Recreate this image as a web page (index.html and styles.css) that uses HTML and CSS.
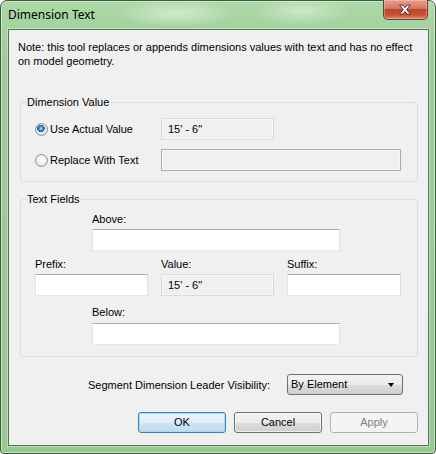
FILE: index.html
```html
<!DOCTYPE html>
<html>
<head>
<meta charset="utf-8">
<link rel="stylesheet" href="styles.css">
</head>
<body>
<div class="window">
  <div class="titlebar">
    <span class="title">Dimension Text</span>
    <div class="close">
      <svg width="45" height="20" viewBox="0 0 45 20">
        <path d="M17 5 L20.5 5 L22.5 7.6 L24.5 5 L28 5 L24.3 9.6 L28 14.2 L24.5 14.2 L22.5 11.6 L20.5 14.2 L17 14.2 L20.7 9.6 Z" fill="#ffffff" stroke="#5a2a22" stroke-width="1" stroke-linejoin="round"/>
      </svg>
    </div>
  </div>
  <div class="client">
    <p class="note">Note: this tool replaces or appends dimensions values with text and has no effect<br>on model geometry.</p>

    <fieldset class="group g1">
      <legend>Dimension Value</legend>
      <div class="radio-row">
        <div class="radio-opt"><span class="radio checked"></span><span>Use Actual Value</span></div>
        <div class="box readonly w113">15' - 6"</div>
      </div>
      <div class="radio-row second">
        <div class="radio-opt"><span class="radio"></span><span>Replace With Text</span></div>
        <div class="box disabled w240"></div>
      </div>
    </fieldset>

    <fieldset class="group g2">
      <legend>Text Fields</legend>
      <div class="mid">
        <div class="lbl">Above:</div>
        <div class="box w248"></div>
      </div>
      <div class="tri">
        <div class="cell"><div class="lbl">Prefix:</div><div class="box w113"></div></div>
        <div class="cell"><div class="lbl">Value:</div><div class="box readonly w113">15' - 6"</div></div>
        <div class="cell"><div class="lbl">Suffix:</div><div class="box w114"></div></div>
      </div>
      <div class="mid below">
        <div class="lbl">Below:</div>
        <div class="box w248"></div>
      </div>
    </fieldset>

    <div class="leader-row">
      <span>Segment Dimension Leader Visibility:</span>
      <div class="select">By Element<span class="arrow"></span></div>
    </div>

    <div class="buttons">
      <div class="btn default">OK</div>
      <div class="btn">Cancel</div>
      <div class="btn disabled">Apply</div>
    </div>
  </div>
</div>
</body>
</html>
```

FILE: styles.css
```css
html, body {
  margin: 0;
  padding: 0;
  background: #ffffff;
}

body {
  font-family: "Liberation Sans", Arial, sans-serif;
  font-size: 11px;
  color: #000000;
}

.window {
  position: relative;
  width: 436px;
  height: 454px;
  box-sizing: border-box;
  border: 1px solid #3f5a3f;
  border-radius: 7px 7px 4px 4px;
  background:
    radial-gradient(ellipse 60px 14px at 175px 12px, rgba(220, 240, 214, 0.8), rgba(220, 240, 214, 0) 100%),
    radial-gradient(ellipse 50px 14px at 300px 10px, rgba(220, 240, 214, 0.7), rgba(220, 240, 214, 0) 100%),
    linear-gradient(#acd8a6 0px, #a4d39f 28px, #9ccc97 60px, #98c993 100%);
  box-shadow: inset 0 0 0 1px rgba(255, 255, 255, 0.45);
}

.titlebar {
  height: 28px;
  display: flex;
  align-items: center;
}

.title {
  font-family: "Noto Sans", "Liberation Sans", sans-serif;
  font-size: 12px;
  padding-left: 7px;
  margin-top: -1px;
  color: #000000;
}

.close {
  position: absolute;
  top: -1px;
  right: 7px;
  width: 45px;
  height: 20px;
  box-sizing: border-box;
  border: 1px solid #6b3a30;
  border-top: none;
  border-radius: 0 0 5px 5px;
  background: linear-gradient(#e6a08e 0%, #d47761 45%, #c4412a 50%, #c9553b 80%, #e08a6b 100%);
  box-shadow: inset 0 0 0 1px rgba(255, 220, 210, 0.35);
  display: flex;
}

.close svg {
  display: block;
  margin-left: -1px;
}

.client {
  margin: 0 6px 0 7px;
  height: 417px;
  box-sizing: border-box;
  border: 1px solid #587458;
  background: #f0f0f0;
  box-shadow: 0 0 0 1px rgba(255, 255, 255, 0.35);
  display: flex;
  flex-direction: column;
}

.note {
  margin: 0;
  padding: 10px 9px 0 9px;
  line-height: 14px;
}

.group {
  margin: 27px 10px 0 11px;
  padding: 9px 13px 10px 14px;
  border: 1px solid #d5dfe5;
  border-radius: 3px;
  min-width: 0;
}

.group legend {
  margin-left: -9px;
  padding: 0 1px;
  line-height: 14px;
  height: 14px;
}

.radio-row {
  display: grid;
  grid-template-columns: 126px auto;
  align-items: center;
  height: 22px;
}

.radio-row.second {
  margin-top: 9px;
}

.radio-opt {
  display: flex;
  align-items: center;
}

.radio {
  width: 13px;
  height: 13px;
  box-sizing: border-box;
  border-radius: 50%;
  border: 1px solid #8f8f8f;
  background: radial-gradient(circle at 50% 40%, #ffffff 0%, #f2f2f2 45%, #cfcfcf 100%);
  margin-right: 2px;
  flex: none;
}

.radio.checked {
  background:
    radial-gradient(circle at 45% 40%, #b6ecff 0px, #3fa4df 1.6px, #1c66a8 3.2px, #1a4f86 3.6px, rgba(0, 0, 0, 0) 3.9px),
    radial-gradient(circle at 50% 40%, #ffffff 0%, #f0f0f0 45%, #cfcfcf 100%);
}

.box {
  height: 22px;
  box-sizing: border-box;
  border: 1px solid;
  border-color: #abadb3 #dbdfe6 #e3e9ef #e2e3ea;
  background: #ffffff;
  line-height: 20px;
  padding-left: 6px;
}

.box.readonly {
  background: #f0f0f0;
  border-color: #d9d9d9;
  box-shadow: inset 0 0 0 1px #f7f7f7;
}

.box.disabled {
  background: #f0f0f0;
  border-color: #adadad;
  box-shadow: inset 0 0 0 1px #f7f7f7;
}

.w113 { width: 113px; }
.w114 { width: 114px; }
.w240 { width: 240px; }
.w248 { width: 248px; }

.g2 {
  margin-top: 10px;
  padding-top: 6px;
  padding-bottom: 11px;
}

.lbl {
  height: 14px;
  line-height: 14px;
}

.mid {
  margin-left: 57px;
  display: flex;
  flex-direction: column;
  gap: 3px;
}

.mid.below {
  margin-top: 9px;
  gap: 4px;
}

.tri {
  margin-top: 6px;
  display: grid;
  grid-template-columns: 113px 113px 114px;
  column-gap: 13px;
}

.cell {
  display: flex;
  flex-direction: column;
  gap: 3px;
}

.leader-row {
  margin-top: 17px;
  display: flex;
  justify-content: flex-end;
  align-items: center;
  gap: 17px;
  padding-right: 25px;
  height: 21px;
}

.select {
  position: relative;
  width: 116px;
  height: 21px;
  box-sizing: border-box;
  border: 1px solid #707070;
  border-radius: 3px;
  background: linear-gradient(#f2f2f2 0%, #ebebeb 50%, #dddddd 51%, #cfcfcf 100%);
  line-height: 19px;
  padding-left: 3px;
}

.arrow {
  position: absolute;
  right: 8px;
  top: 8px;
  width: 0;
  height: 0;
  border-left: 3.5px solid transparent;
  border-right: 3.5px solid transparent;
  border-top: 4px solid #000000;
}

.buttons {
  margin-top: 17px;
  display: flex;
  justify-content: flex-end;
  gap: 8px;
  padding-right: 10px;
}

.btn {
  width: 88px;
  height: 21px;
  box-sizing: border-box;
  border: 1px solid #707070;
  border-radius: 3px;
  background: linear-gradient(#f2f2f2 0%, #ebebeb 50%, #dddddd 51%, #cfcfcf 100%);
  box-shadow: inset 0 0 0 1px rgba(255, 255, 255, 0.6);
  text-align: center;
  line-height: 19px;
}

.btn.default {
  border-color: #3c7fb1;
  background: linear-gradient(#eaf6fd 0%, #e0eef8 50%, #cfe4f3 51%, #c2dbed 100%);
  box-shadow: inset 0 0 0 1px rgba(150, 220, 250, 0.8);
}

.btn.disabled {
  border-color: #adb2b5;
  background: #f4f4f4;
  box-shadow: none;
  color: #838383;
}
```
